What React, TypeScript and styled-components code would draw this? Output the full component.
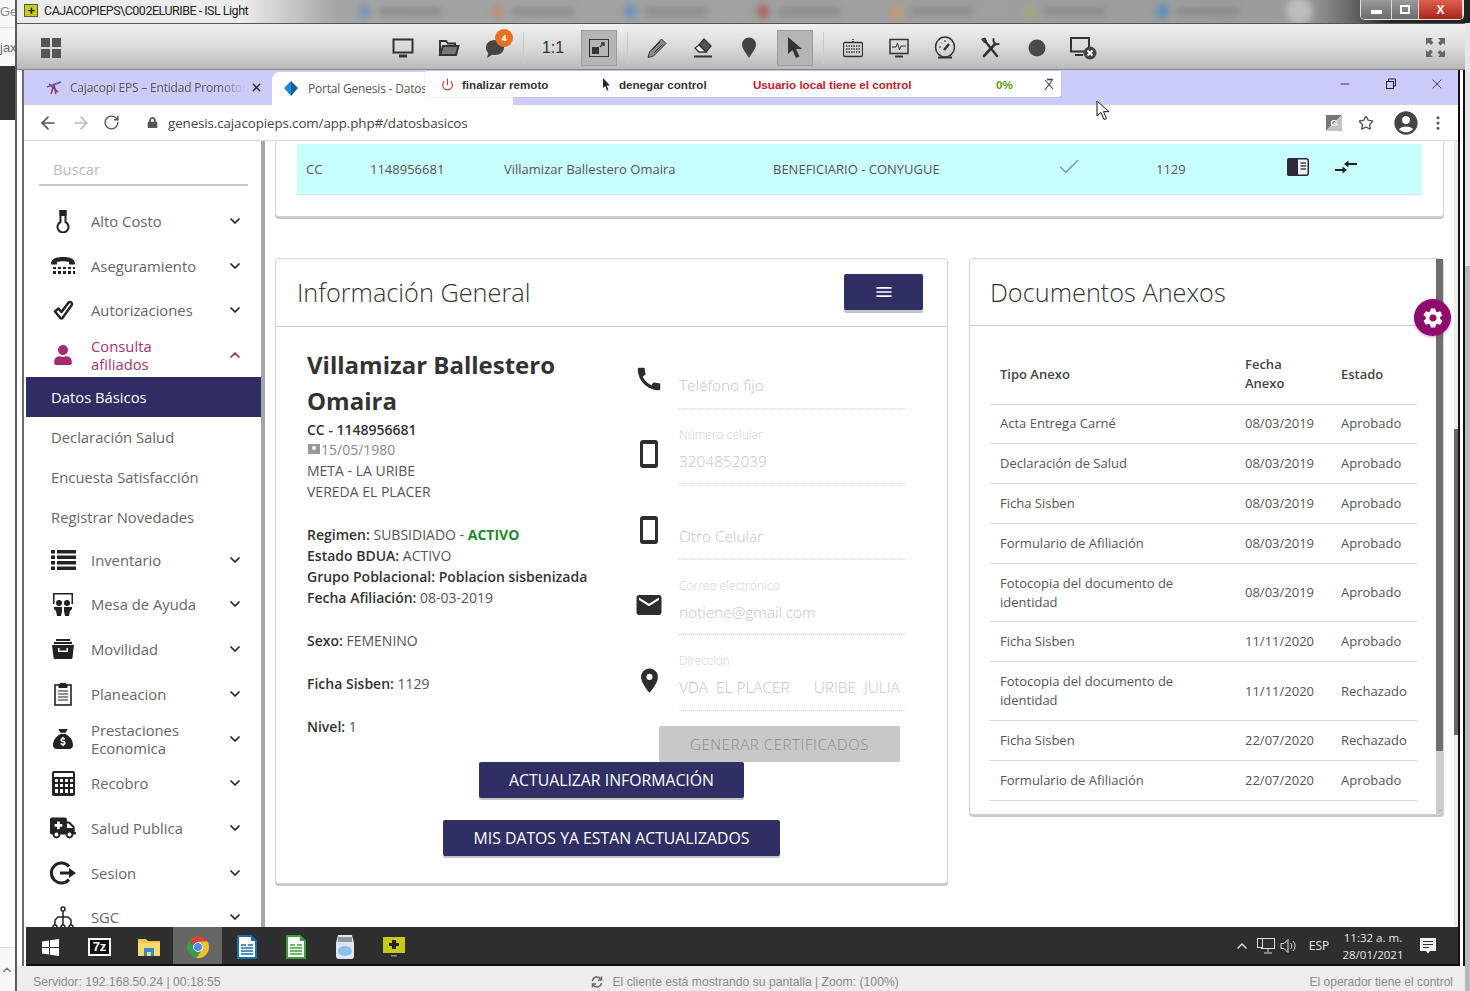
import { ReactNode } from 'react';
import styled, { createGlobalStyle } from 'styled-components';
import { FaAmbulance, FaLock, FaUser } from 'react-icons/fa';
import { FaSackDollar } from 'react-icons/fa6';
import { MdAccountCircle, MdCall, MdEmail, MdMenu, MdPlace, MdSettings } from 'react-icons/md';
import {
  ArrowLeft,
  ArrowRight,
  Check,
  ChevronDown,
  ChevronUp,
  EllipsisVertical,
  Minus,
  Power,
  RotateCw,
  Star,
  X,
} from 'lucide-react';

const GlobalStyle = createGlobalStyle`
  html, body {
    margin: 0;
    padding: 0;
    background: #fff;
    font-family: "Open Sans", sans-serif;
  }
  * { box-sizing: border-box; }
`;

const Screen = styled.div`
  position: relative;
  display: flex;
  width: 1470px;
  height: 991px;
  overflow: hidden;
  background: #fff;
`;

/* ---- desktop sliver on the left ---- */
const LeftStrip = styled.div`
  display: flex;
  flex-direction: column;
  width: 17px;
  height: 100%;
  border-right: 2px solid #5c5c5c;
  background: #f7f7f7;
  color: #888;
  font: 13px "Liberation Sans", sans-serif;
  overflow: hidden;
`;

const StripTab = styled.div`
  height: 28px;
  line-height: 24px;
  border-bottom: 1px solid #ddd;
  white-space: nowrap;
`;

const StripUrl = styled.div`
  height: 38px;
  line-height: 40px;
  white-space: nowrap;
  color: #666;
`;

const StripDark = styled.div`
  height: 54px;
  background: #333;
`;

const StripBody = styled.div`
  flex: 1;
  background: #fff;
  border-bottom: 1px solid #ddd;
`;

const StripFoot = styled.div`
  display: flex;
  align-items: center;
  height: 43px;
  color: #777;
`;

const Window = styled.div`
  display: flex;
  flex-direction: column;
  flex: 1;
  min-width: 0;
`;

/* ---- title bar ---- */
const TitleBar = styled.div`
  display: flex;
  align-items: flex-start;
  height: 23px;
  background: linear-gradient(90deg, #ececec 0, #ececec 225px, #a4a4a4 320px, #9c9c9c 1290px, #6d6d6d 1330px, #222 1375px);
  overflow: hidden;
`;

const TitleBlock = styled.div`
  display: flex;
  align-items: center;
  gap: 6px;
  width: 334px;
  height: 21px;
  padding-left: 7px;
  color: #222;
  font: 12.5px "Roboto", sans-serif;
  letter-spacing: -0.5px;
  white-space: nowrap;
`;

const IslBadge = styled.span`
  display: flex;
  align-items: center;
  justify-content: center;
  width: 14px;
  height: 13px;
  border: 1px solid #555;
  background: #c8cc12;
  color: #222;
  font: bold 13px/11px "Liberation Sans", sans-serif;
`;

const BlurredTabs = styled.div`
  display: flex;
  filter: blur(3px);
`;

const BlurredTab = styled.div`
  display: flex;
  align-items: center;
  gap: 8px;
  width: 133px;
  height: 22px;
  padding-left: 7px;
`;

const BlurDot = styled.span<{ $color: string }>`
  width: 13px;
  height: 15px;
  border-radius: 50%;
  background: ${p => p.$color};
`;

const BlurLabel = styled.span`
  width: 62px;
  height: 7px;
  background: #8a8a8a;
`;

const BlurCircle = styled.div`
  width: 26px;
  height: 26px;
  margin: -2px 0 0 4px;
  border-radius: 50%;
  background: #bdbdbd;
  filter: blur(3px);
`;

const WinControls = styled.div`
  display: flex;
  margin: 0 6px 0 auto;
  height: 20px;
  border: 1px solid #e4e4e4;
  border-top: 0;
  border-radius: 0 0 5px 5px;
  overflow: hidden;
`;

const WinControl = styled.div<{ $w: number; $close?: boolean }>`
  display: flex;
  align-items: center;
  justify-content: center;
  width: ${p => p.$w}px;
  background: ${p => (p.$close ? 'linear-gradient(#e0604f, #a8261a)' : 'linear-gradient(#9a9a9a, #6a6a6a)')};
  border-right: 1px solid #d8d8d8;
  color: #fff;
  font: bold 12px "Liberation Sans", sans-serif;
`;

const WinMinMark = styled.span`
  width: 11px;
  height: 4px;
  margin-top: 5px;
  background: #fff;
`;

const WinMaxMark = styled.span`
  width: 10px;
  height: 9px;
  border: 2px solid #fff;
`;

const LowerRow = styled.div`
  display: flex;
  flex: 1;
  min-height: 0;
`;

const RemoteFrame = styled.div`
  display: flex;
  flex-direction: column;
  flex: 1;
  min-width: 0;
`;

const OuterScroll = styled.div`
  width: 5px;
  background: linear-gradient(#e6e6e6 0, #e6e6e6 243px, #b8b8b8 243px);
`;

/* ---- ISL toolbar ---- */
const Toolbar = styled.div`
  display: flex;
  align-items: center;
  height: 47px;
  padding: 2px 20px 0 24px;
  border-top: 1px solid #555;
  border-bottom: 1px solid #888;
  background: linear-gradient(#f1f1f1, #d8d8d8 55%, #b9b9b9);
  color: #444;
`;

const ToolGroup = styled.div`
  display: flex;
  align-items: center;
  margin-left: 319px;
`;

const ToolBtn = styled.div<{ $active?: boolean }>`
  position: relative;
  display: flex;
  align-items: center;
  justify-content: center;
  width: 46px;
  height: 36px;
  font: 16px "Liberation Sans", sans-serif;
  color: #333;
  ${p => p.$active && `
    margin: 0 5px;
    width: 36px;
    background: #b5b5b5;
    border: 1px solid #9c9c9c;
  `}
`;

const ToolSep = styled.div`
  width: 1px;
  height: 32px;
  margin: 0 6px 0 5px;
  background: #c9c9c9;
`;

const ChatBadge = styled.span`
  position: absolute;
  top: -1px;
  right: 5px;
  display: flex;
  align-items: center;
  justify-content: center;
  width: 18px;
  height: 18px;
  border-radius: 50%;
  background: #e8701f;
  color: #fff;
  font: bold 9px "Open Sans", sans-serif;
`;

const ExpandBtn = styled.div`
  display: flex;
  margin-left: auto;
`;

/* ---- frame around the remote screen ---- */
const RemoteBody = styled.div`
  display: flex;
  flex: 1;
  min-height: 0;
  padding-left: 5px;
  background: #fff;
`;

const Browser = styled.div`
  display: flex;
  flex-direction: column;
  flex: 1;
  min-width: 0;
  border-left: 2px solid #6b6b6b;
`;

const RightRail = styled.div`
  width: 7px;
  border-left: 2px solid #111;
  border-right: 2px solid #111;
  background: #fff;
`;

const TabStrip = styled.div`
  display: flex;
  align-items: flex-end;
  height: 35px;
  background: #ccccfb;
`;

const InactiveTab = styled.div`
  display: flex;
  align-items: center;
  width: 246px;
  height: 35px;
  padding: 0 7px 0 22px;
  color: #555;
  font: 12px "Open Sans", sans-serif;
  white-space: nowrap;
`;

const TabLabel = styled.span`
  width: 176px;
  margin-left: 8px;
  overflow: hidden;
  letter-spacing: -0.2px;
  -webkit-mask-image: linear-gradient(90deg, #000 85%, transparent);
  mask-image: linear-gradient(90deg, #000 85%, transparent);
`;

const TabClose = styled.span`
  display: flex;
  margin-left: auto;
  color: #222;
`;

const ActiveTab = styled.div`
  display: flex;
  align-items: center;
  width: 241px;
  height: 33px;
  margin-left: 2px;
  padding-left: 11px;
  border-radius: 8px 8px 0 0;
  background: #fff;
  color: #555;
  font: 12px "Open Sans", sans-serif;
  white-space: nowrap;
  letter-spacing: -0.2px;
`;

const ActiveTabLabel = styled.span`
  margin-left: 9px;
`;

const StripControls = styled.div`
  display: flex;
  align-items: center;
  gap: 30px;
  height: 31px;
  margin: 0 13px 6px auto;
  color: #222;
`;

const StripControl = styled.span`
  display: flex;
  justify-content: center;
  width: 16px;
`;

const AddressBar = styled.div`
  display: flex;
  align-items: center;
  height: 36px;
  padding: 0 11px 0 14px;
  border-bottom: 1px solid #dcdcdc;
  background: #fff;
  color: #555;
`;

const NavIcons = styled.div`
  display: flex;
  align-items: center;
  gap: 12.5px;
`;

const LockSlot = styled.span`
  display: flex;
  margin: 0 10px 0 27px;
  color: #555;
`;

const UrlText = styled.span`
  color: #444;
  font: 13.4px "Open Sans", sans-serif;
  letter-spacing: -0.12px;
`;

const AddressActions = styled.div`
  display: flex;
  align-items: center;
  gap: 16px;
  margin-left: auto;
`;

const TranslateMark = styled.span`
  display: flex;
  align-items: center;
  justify-content: center;
  width: 16px;
  height: 16px;
  background: linear-gradient(135deg, #777 50%, #c4c4c4 50%);
  color: #fff;
  font: bold 9px "Liberation Sans", sans-serif;
`;

const Avatar = styled(MdAccountCircle)`
  margin: 0 -7px 0 2px;
  color: #444;
`;

/* ---- floating remote session bar ---- */
const SessionBar = styled.div`
  position: absolute;
  top: 71px;
  left: 425px;
  display: flex;
  align-items: center;
  width: 636px;
  height: 26px;
  border-radius: 0 0 3px 3px;
  background: #fff;
  box-shadow: 0 0 2px rgba(0, 0, 0, 0.2);
  font: bold 11.6px "Liberation Sans", sans-serif;
`;

const SessionItem = styled.span<{ $w: number; $color?: string; $pl?: number }>`
  display: flex;
  align-items: center;
  gap: 8px;
  flex: none;
  width: ${p => p.$w}px;
  padding-left: ${p => p.$pl ?? 0}px;
  color: ${p => p.$color ?? '#333'};
  white-space: nowrap;
`;

const MouseCursor = styled.svg`
  position: absolute;
  top: 100px;
  left: 1096px;
`;

/* ---- sidebar ---- */
const Content = styled.div`
  display: flex;
  flex: 1;
  min-height: 0;
  padding-left: 2px;
  background: #fff;
`;

const Sidebar = styled.nav`
  flex: none;
  width: 235px;
  height: 100%;
  overflow: hidden;
  background: #fff;
`;

const SearchBox = styled.div`
  height: 45px;
  margin: 0 13px 12.7px;
  padding: 16px 0 0 14px;
  border-bottom: 2px solid #c8c8c8;
  color: #bbb;
  font-size: 14.8px;
  line-height: 24px;
`;

const MenuItem = styled.div<{ $active?: boolean }>`
  display: flex;
  align-items: center;
  height: 44.7px;
  padding: 0 18px 0 25px;
  color: ${p => (p.$active ? '#a8336f' : '#666')};
  font-size: 14.8px;
  line-height: 18px;
`;

const MenuIcon = styled.span<{ $active?: boolean }>`
  display: flex;
  align-items: center;
  justify-content: center;
  flex: none;
  width: 24px;
  height: 24px;
  color: ${p => (p.$active ? '#a52a6b' : '#222')};
  svg { flex: none; }
`;

const MenuLabel = styled.span`
  flex: 1;
  margin-left: 16px;
`;

const MenuChevron = styled.span<{ $active?: boolean }>`
  display: flex;
  color: ${p => (p.$active ? '#a52a6b' : '#222')};
`;

const SubItem = styled.div<{ $active?: boolean }>`
  display: flex;
  align-items: center;
  height: 40px;
  padding-left: 25px;
  background: ${p => (p.$active ? '#2f2d63' : 'transparent')};
  color: ${p => (p.$active ? '#fff' : '#666')};
  font-size: 14.8px;
`;

const SideTrack = styled.div`
  flex: none;
  width: 4px;
  background: #a6a6a6;
`;

/* ---- main content ---- */
const Main = styled.main`
  flex: 1;
  min-width: 0;
  padding: 0 10px 0 10px;
  overflow: hidden;
  background: #fff;
`;

const PageTrack = styled.div`
  flex: none;
  width: 4px;
  background: linear-gradient(#ececec 0, #ececec 288px, #666 288px, #666 594px, #ececec 594px);
`;

const TopCard = styled.section`
  height: 76px;
  padding: 3px 21px 0;
  border: 1px solid #d3d3d3;
  border-top: 0;
  border-radius: 0 0 4px 4px;
  box-shadow: 0 2px 0 #c8c8c8;
`;

const AffiliateRow = styled.div`
  display: grid;
  grid-template-columns: 64px 134px 269px 283px 100px 131px 48px 40px;
  align-items: center;
  height: 51px;
  padding-left: 9px;
  border-bottom: 1px solid #d5e8e8;
  background: #c8ffff;
  color: #555;
  font-size: 13px;
`;

const CellIcon = styled.span`
  display: flex;
  margin-top: -4px;
  color: #222;
`;

const CheckMark = styled.span`
  display: flex;
  margin-top: -4px;
  color: #8a9aae;
`;

const Columns = styled.div`
  display: flex;
  align-items: flex-start;
  gap: 21px;
  margin-top: 41px;
`;

const Card = styled.section<{ $w: number }>`
  flex: none;
  width: ${p => p.$w}px;
  border: 1px solid #d3d3d3;
  border-radius: 4px;
  box-shadow: 0 2px 0 #c8c8c8;
  background: #fff;
`;

const CardHeader = styled.header<{ $h: number; $pl: number }>`
  display: flex;
  align-items: center;
  justify-content: space-between;
  height: ${p => p.$h}px;
  padding: 0 24px 0 ${p => p.$pl}px;
  border-bottom: 1px solid #c9c9c9;
`;

const CardTitle = styled.h2`
  margin: -1px 0 0;
  color: #333;
  font-size: 25.3px;
  font-weight: 300;
`;

const MenuButton = styled.button`
  display: flex;
  align-items: center;
  justify-content: center;
  width: 79px;
  height: 36px;
  margin-top: -1px;
  border: 0;
  border-radius: 2px;
  background: #2f2f66;
  box-shadow: 0 3px 0 #c4c4c4;
  color: #fff;
`;

const InfoBody = styled.div`
  display: grid;
  grid-template-columns: 361px 270px;
`;

const Person = styled.div`
  padding: 20px 0 0 31px;
  color: #555;
  font-size: 14px;
  line-height: 20.9px;
`;

const PersonName = styled.h3`
  margin: 0 0 0.5px;
  color: #333;
  font-size: 24px;
  font-weight: 700;
  line-height: 36px;
`;

const PersonStrong = styled.div`
  color: #333;
  font-weight: 600;
`;

const BirthRow = styled.div`
  display: flex;
  align-items: flex-start;
  color: #888;
`;

const BirthIcon = styled.svg`
  margin-top: 2px;
`;

const InfoGroup = styled.div`
  margin-top: 22px;
`;

const Strong = styled.b`
  color: #333;
  font-weight: 600;
`;

const ActiveText = styled.b`
  color: #1c8a2a;
  font-weight: 700;
`;

const Contact = styled.div`
  display: flex;
  flex-direction: column;
  padding-top: 6px;
`;

const Field = styled.div`
  display: grid;
  grid-template-columns: 24px 227px;
  column-gap: 18px;
  height: 75.5px;
`;

const FieldIcon = styled.span`
  display: flex;
  align-items: center;
  justify-content: center;
  align-self: end;
  height: 24px;
  margin-bottom: 18px;
  color: #2d2d2d;
  svg { flex: none; }
`;

const FieldBody = styled.div`
  display: flex;
  flex-direction: column;
  justify-content: flex-end;
  border-bottom: 1px dotted #d4d4d4;
`;

const FieldLabel = styled.span`
  color: #cfcfcf;
  font-size: 12px;
  font-weight: 300;
  line-height: 25px;
`;

const FieldValue = styled.span`
  height: 36.5px;
  padding-bottom: 6.5px;
  color: #c4c4c4;
  font-size: 15.4px;
  font-weight: 300;
  line-height: 30px;
  white-space: pre;
`;

const DisabledButton = styled.div`
  display: flex;
  align-items: center;
  justify-content: center;
  width: 241px;
  height: 36px;
  margin: 15.5px 0 0 22px;
  border-radius: 2px;
  background: #c8c8c8;
  color: #8a8a8a;
  font-size: 15px;
  font-weight: 300;
  letter-spacing: 0.6px;
`;

const InfoActions = styled.div`
  display: flex;
  flex-direction: column;
  align-items: center;
  gap: 22px;
  padding-bottom: 27px;
`;

const PrimaryButton = styled.button<{ $w: number }>`
  width: ${p => p.$w}px;
  height: 36px;
  border: 0;
  border-radius: 2px;
  background: #2f2f66;
  box-shadow: 0 2px 0 #c4c4c4;
  color: #fff;
  font: 400 15.8px "Open Sans", sans-serif;
`;

const DocsCard = styled(Card)`
  position: relative;
  height: 557px;
`;

const DocsScroll = styled.div`
  position: absolute;
  top: 0;
  right: 0;
  bottom: 0;
  display: flex;
  align-items: flex-end;
  width: 7px;
  background: linear-gradient(#6e6e6e 0, #6e6e6e 492px, #cdcdcd 492px);
  color: #888;
`;

const DocsBody = styled.div`
  padding: 19px 26px 0 20px;
`;

const DocsTable = styled.table`
  width: 427px;
  border-collapse: collapse;
  table-layout: fixed;
  color: #555;
  font-size: 13px;
  line-height: 19px;
`;

const HeadCell = styled.th<{ $w: number }>`
  width: ${p => p.$w}px;
  height: 59px;
  padding: 0 10px;
  border-bottom: 1px solid #d3d3d3;
  color: #444;
  font-weight: 600;
  text-align: left;
`;

const DocCell = styled.td`
  padding: 9.9px 10px;
  border-bottom: 1px solid #d8d8d8;
`;

const SettingsFab = styled.div`
  position: absolute;
  top: 299px;
  left: 1414px;
  display: flex;
  align-items: center;
  justify-content: center;
  width: 37px;
  height: 37px;
  border-radius: 50%;
  background: #8e0a6c;
  box-shadow: 0 1px 3px rgba(120, 0, 90, 0.4);
  color: #fff;
`;

/* ---- windows taskbar ---- */
const Taskbar = styled.div`
  display: flex;
  align-items: center;
  flex: none;
  height: 39px;
  margin-left: 2px;
  border-bottom: 2px solid #111;
  background: #2e2e2e;
  color: #e8e8e8;
`;

const TaskSlot = styled.div<{ $active?: boolean }>`
  display: flex;
  align-items: center;
  justify-content: center;
  width: 49px;
  height: 37px;
  padding-top: 3px;
  background: ${p => (p.$active ? '#666' : 'transparent')};
`;

const SevenZip = styled.span`
  display: flex;
  align-items: center;
  justify-content: center;
  width: 23px;
  height: 18px;
  border: 2px solid #fff;
  background: #111;
  color: #fff;
  font: bold 13px/14px "Liberation Sans", sans-serif;
`;

const Tray = styled.div`
  display: flex;
  align-items: center;
  height: 100%;
  margin-left: auto;
  font-size: 12px;
`;

const TrayIcon = styled.span<{ $w: number }>`
  display: flex;
  align-items: center;
  justify-content: center;
  width: ${p => p.$w}px;
`;

const TrayClock = styled.div`
  width: 76px;
  margin-left: -3px;
  text-align: center;
  font-size: 11.5px;
  line-height: 17px;
`;

const Status = styled.footer`
  display: flex;
  align-items: center;
  flex: none;
  height: 25px;
  padding: 6px 12px 0 16px;
  background: #ededed;
  color: #8a8a8a;
  font: 12.2px "Liberation Sans", sans-serif;
`;

const StatusCenter = styled.span`
  display: flex;
  align-items: center;
  gap: 9px;
  margin-left: 371px;
`;

const StatusEnd = styled.span`
  margin-left: auto;
  font-size: 12px;
`;

/* ---- drawn icons ---- */
const GridIcon = () => (
  <svg width="20" height="20" viewBox="0 0 20 20" fill="#555">
    <rect width="9" height="9" /><rect x="11" width="9" height="9" />
    <rect y="11" width="9" height="9" /><rect x="11" y="11" width="9" height="9" />
  </svg>
);

const MonitorIcon = () => (
  <svg width="22" height="20" viewBox="0 0 22 20" fill="none" stroke="#333" strokeWidth="2">
    <rect x="1.500" y="1.500" width="19" height="13" /><path d="M7 18h8" strokeWidth="3" />
  </svg>
);

const FolderIcon = () => (
  <svg width="22" height="18" viewBox="0 0 22 18" fill="none" stroke="#333" strokeWidth="2">
    <path d="M2 16V2h6l2 2.500h7V7" /><path d="M2 16 5 7h15.500L18 16Z" fill="#777" />
  </svg>
);

const ChatIcon = () => (
  <svg width="24" height="22" viewBox="0 0 24 22" fill="#444">
    <path d="M12 3c5.500 0 9 3 9 7.500S17.500 18 12 18c-1 0-2 0-3-.3L4 21l1.300-5C3.500 14.500 3 12.500 3 10.500 3 6 6.500 3 12 3Z" />
  </svg>
);

const ResizeIcon = () => (
  <svg width="20" height="18" viewBox="0 0 20 18">
    <rect x=".5" y=".5" width="19" height="17" fill="none" stroke="#333" />
    <rect x="3" y="8" width="7" height="7" fill="#333" />
    <path d="m11 8 4-4M12 4h3v3" stroke="#333" fill="none" strokeWidth="1.300" />
  </svg>
);

const PencilIcon = () => (
  <svg width="22" height="22" viewBox="0 0 22 22" fill="#8a8a8a" stroke="#333">
    <path d="M15.500 2 20 6.500 7.500 19 2 20.500 3.500 15Z" />
    <path d="m6 13 8-8M8.500 15.500l8-8" fill="none" />
  </svg>
);

const EraserIcon = () => (
  <svg width="22" height="22" viewBox="0 0 22 22" stroke="#333" strokeWidth="1.300">
    <path d="M12 2 19 9l-5 6-7-7Z" fill="#555" />
    <path d="M7 8l7 7H7l-4-4Z" fill="#f4f4f4" />
    <path d="M2 19.500h18" strokeWidth="2" />
  </svg>
);

const PinIcon = () => (
  <svg width="16" height="22" viewBox="0 0 16 22" fill="#444">
    <path d="M8 21C4 15 1 11 1 7.500a7 7 0 0 1 14 0C15 11 12 15 8 21Z" />
  </svg>
);

const ArrowIcon = () => (
  <svg width="18" height="24" viewBox="0 0 18 24" fill="#333">
    <path d="M2 1v17l4.500-4 3.500 8 3.500-1.500-3.500-7.500H16Z" />
  </svg>
);

const KeyboardIcon = () => (
  <svg width="20" height="20" viewBox="0 0 20 20" stroke="#333" fill="none">
    <rect x=".5" y="4.500" width="19" height="14" rx="1.500" strokeWidth="1.300" />
    <path d="M10 4.500V1M3 8h14M3 11h14M3 14h14" strokeDasharray="1.500 1" strokeWidth="1.500" />
  </svg>
);

const WaveMonitorIcon = () => (
  <svg width="20" height="20" viewBox="0 0 20 20" fill="none" stroke="#333" strokeWidth="1.500">
    <rect x="1" y="1.500" width="18" height="14" />
    <path d="M3 9h4l1.500-4 2 7L12 8h5" strokeWidth="1" />
    <path d="M6 18.500h8" strokeWidth="2" />
  </svg>
);

const GaugeIcon = () => (
  <svg width="22" height="24" viewBox="0 0 22 24" fill="none" stroke="#333" strokeWidth="1.500">
    <ellipse cx="11" cy="11" rx="9.500" ry="10" />
    <path d="m10 14 5-6" strokeWidth="2.500" /><path d="M4 21.500h14" strokeWidth="2" />
    <path d="M5 11h2M11 4v2M7 6.500l1 1" strokeWidth="1" />
  </svg>
);

const ToolsIcon = () => (
  <svg width="20" height="22" viewBox="0 0 20 22" fill="none" stroke="#333" strokeLinecap="round">
    <path d="M4 4 16 19" strokeWidth="2.400" />
    <path d="M14 7 3 19" strokeWidth="2.600" />
    <path d="M12.500 2a4 4 0 0 0 5 5" strokeWidth="2" />
    <path d="M1 2l3-1 1.500 3-2 1.500Z" fill="#333" strokeWidth="1" />
  </svg>
);

const DotIcon = () => (
  <svg width="18" height="18" viewBox="0 0 18 18"><circle cx="9" cy="9" r="8.500" fill="#4a4a4a" /></svg>
);

const MonitorCloseIcon = () => (
  <svg width="28" height="24" viewBox="0 0 28 24" fill="none">
    <path d="M16 15.500H2V2h18v11" stroke="#333" strokeWidth="2" />
    <path d="M6 19h8" stroke="#333" strokeWidth="2" />
    <circle cx="21" cy="17" r="6.500" fill="#444" />
    <path d="m18.500 14.500 5 5m0-5-5 5" stroke="#fff" strokeWidth="1.800" />
  </svg>
);

const ExpandIcon = () => (
  <svg width="19" height="19" viewBox="0 0 19 19" fill="#666">
    <path d="M0 0h7L5 2l2.500 2.500L5 7 2.500 4.500 0 7ZM19 0v7l-2-2-2.500 2.500L12 5l2.500-2.500L12 0ZM0 19v-7l2 2 2.500-2.500L7 14l-2.500 2.500L7 19ZM19 19h-7l2-2-2.500-2.500L14 12l2.500 2.500L19 12Z" />
  </svg>
);

const PinCrossIcon = () => (
  <svg width="12" height="13" viewBox="0 0 12 13" fill="none" stroke="#444" strokeWidth="1.100">
    <path d="M2 2l8 9M10 1 2 12" />
    <path d="M4 1.500h5" strokeWidth="1.600" />
  </svg>
);

const SmallPointer = () => (
  <svg width="9" height="13" viewBox="0 0 9 13" fill="#222"><path d="M1 0v10l2.200-2 1.800 4.500 1.500-.6L4.800 7.500H8Z" /></svg>
);

const CajacopiLogo = () => (
  <svg width="16" height="14" viewBox="0 0 16 14" fill="none" strokeWidth="1.500">
    <path d="M1 6c5-2 9-3 14-5" stroke="#5a5ab8" />
    <path d="M5 13 8 3l2 10" stroke="#b0305a" />
    <path d="M3 3l9 8" stroke="#4a4aa0" />
  </svg>
);

const GenesisLogo = () => (
  <svg width="16" height="17" viewBox="0 0 16 17">
    <path d="M8 1 1 8l7 8Z" fill="#2188cf" /><path d="M8 1l7 7-7 8Z" fill="#155e96" />
  </svg>
);

const FlaskIcon = () => (
  <svg width="14" height="24" viewBox="0 0 14 24" fill="none" stroke="#222" strokeWidth="2">
    <path d="M4.500 2h5v11a5.500 5.500 0 1 1-5 0Z" />
    <path d="M4.500 2h5v4h-5Z" fill="#222" />
  </svg>
);

const HandsetIcon = () => (
  <svg width="26" height="19" viewBox="0 0 26 19" fill="#222">
    <path d="M1 7.500C1 3 6 1 13 1s12 2 12 6.500c0 .7-.5 1-1 1h-4c-.6 0-1-.4-1-1V6c-3-1-9-1-12 0v1.500c0 .6-.4 1-1 1H2c-.5 0-1-.3-1-1Z" />
    <path d="M3 11h3v2H3ZM8 11h3v2H8ZM13 11h3v2h-3ZM18 11h3v2h-3ZM23 11h2v2h-2ZM3 15h3v3H3ZM8 15h3v3H8ZM13 15h3v3h-3ZM18 15h3v3h-3ZM23 15h2v3h-2Z" />
  </svg>
);

const CheckOutlineIcon = () => (
  <svg width="21" height="21" viewBox="0 0 21 21" fill="none" stroke="#222" strokeWidth="2.400" strokeLinejoin="round">
    <path d="M2 11.500 5.500 8.500 8.500 12 15.500 2.500c2-1.200 3.800 0 3.500 2L9.500 18c-.7.800-1.600.800-2.200 0Z" />
  </svg>
);

const ListIcon = () => (
  <svg width="25" height="20" viewBox="0 0 25 20" fill="#222">
    <rect y="0" width="4" height="3.500" /><rect x="6" y="0" width="19" height="3.500" />
    <rect y="5.500" width="4" height="3.500" /><rect x="6" y="5.500" width="19" height="3.500" />
    <rect y="11" width="4" height="3.500" /><rect x="6" y="11" width="19" height="3.500" />
    <rect y="16.500" width="4" height="3.500" /><rect x="6" y="16.500" width="19" height="3.500" />
  </svg>
);

const HelpDeskIcon = () => (
  <svg width="22" height="25" viewBox="0 0 22 25" fill="#222">
    <path d="M1 1h20v11h-1.500V2.500h-17V12H1Z" />
    <circle cx="7" cy="11" r="3" /><circle cx="15" cy="11" r="3" />
    <path d="M2 15h8v4l-1 5H5l-1-5-2-2ZM12 15h8v2l-2 2-1 5h-4l-1-5Z" />
  </svg>
);

const DrawerIcon = () => (
  <svg width="24" height="20" viewBox="0 0 24 20" fill="#222">
    <rect x="5" y="0" width="14" height="2" /><rect x="3" y="3" width="18" height="2" />
    <path d="M1 6h22l-1.500 12.500a1.500 1.500 0 0 1-1.500 1.500H4a1.500 1.500 0 0 1-1.500-1.500ZM7 9v4h10V9h-1.500v2.500h-7V9Z" fillRule="evenodd" />
  </svg>
);

const ClipboardIcon = () => (
  <svg width="18" height="24" viewBox="0 0 18 24" fill="none" stroke="#222">
    <rect x="1" y="3" width="16" height="20" strokeWidth="1.600" />
    <path d="M6 4V1.500h6V4" fill="#222" />
    <rect x="5" y="3" width="8" height="2.500" fill="#222" />
    <path d="M4 9h10M4 12h10M4 15h10M4 18h10" strokeWidth="1.200" />
  </svg>
);

const CalculatorIcon = () => (
  <svg width="23" height="25" viewBox="0 0 23 25" fill="#222">
    <path d="M2 0h19a2 2 0 0 1 2 2v21a2 2 0 0 1-2 2H2a2 2 0 0 1-2-2V2a2 2 0 0 1 2-2Zm0 2v4h19V2ZM3 8v3h3V8Zm5 0v3h3V8Zm5 0v3h3V8Zm5 0v3h3V8ZM3 13v3h3v-3Zm5 0v3h3v-3Zm5 0v3h3v-3Zm5 0v3h3v-3ZM3 18v4h3v-4Zm5 0v4h3v-4Zm5 0v4h3v-4Zm5 0v4h3v-4Z" fillRule="evenodd" />
  </svg>
);

const LogoutIcon = () => (
  <svg width="28" height="24" viewBox="0 0 28 24" fill="none" stroke="#222" strokeWidth="3">
    <path d="M20 5.500A10 10 0 1 0 20 18.500" />
    <path d="M11 12h12" /><path d="M20 7l7 5-7 5Z" fill="#222" strokeWidth="0" />
  </svg>
);

const TreeIcon = () => (
  <svg width="24" height="26" viewBox="0 -3 24 26" fill="none" stroke="#222" strokeWidth="1.500">
    <circle cx="12" cy="2" r="2" />
    <path d="M12 4v14M4 18v-5l3-3h10l3 3v5" />
    <circle cx="4" cy="20" r="2" /><circle cx="12" cy="20" r="2" /><circle cx="20" cy="20" r="2" />
  </svg>
);

const TabletIcon = () => (
  <svg width="18" height="28" viewBox="0 0 18 28">
    <path d="M3 0h12a3 3 0 0 1 3 3v22a3 3 0 0 1-3 3H3a3 3 0 0 1-3-3V3a3 3 0 0 1 3-3Zm0 4v20h12V4Z" fill="#2d2d2d" fillRule="evenodd" />
  </svg>
);

const BookIcon = () => (
  <svg width="22" height="18" viewBox="0 0 22 18">
    <rect x=".75" y=".75" width="20.500" height="16.500" rx="2" fill="#e8f4f8" stroke="#262638" strokeWidth="1.500" />
    <path d="M2.500 0H11v18H2.500A2.500 2.500 0 0 1 0 15.500v-13A2.500 2.500 0 0 1 2.500 0Z" fill="#2f2a33" />
    <path d="M13.500 5h5.500M13.500 8h5.500M13.500 11h5.500" stroke="#444" strokeWidth="1.300" />
  </svg>
);

const SwapIcon = () => (
  <svg width="22" height="14" viewBox="0 0 22 14" fill="#222">
    <path d="M0 9h7.500V6.500L12 10l-4.500 3.500V11H0ZM22 3v2h-8.500v2.500L9 4l4.500-3.500V3Z" />
  </svg>
);

const WindowsLogo = () => (
  <svg width="17" height="17" viewBox="0 0 17 17" fill="#fff">
    <path d="M0 2.500 7 1.500V8H0ZM8 1.300 17 0v8H8ZM0 9h7v6.500L0 14.500ZM8 9h9v8l-9-1.300Z" />
  </svg>
);

const FolderTask = () => (
  <svg width="22" height="20" viewBox="0 0 22 20">
    <path d="M0 2h8l2 2h12v15H0Z" fill="#f4c542" />
    <path d="M0 6h22v13H0Z" fill="#fbd971" />
    <rect x="6" y="11" width="10" height="8" fill="#2c8fc9" />
    <rect x="9" y="15" width="4" height="4" fill="#fbd971" />
  </svg>
);

const ChromeLogo = () => (
  <svg width="24" height="24" viewBox="0 0 24 24">
    <path d="M12 1a11 11 0 0 1 9.500 5.500H12a5.500 5.500 0 0 0-5 3.200L3.500 5A11 11 0 0 1 12 1Z" fill="#d8433a" />
    <path d="M3.500 5 8 13a5.500 5.500 0 0 0 5.500 4l-3 6A11 11 0 0 1 3.500 5Z" fill="#3b9a4b" />
    <path d="M21.500 6.500A11 11 0 0 1 10.500 23l4.500-7.500a5.500 5.500 0 0 0 .5-7l-3.500-2Z" fill="#eec22d" />
    <circle cx="12" cy="12" r="4.500" fill="#4c8bf0" stroke="#fff" strokeWidth="1" />
  </svg>
);

const DocTask = ({ color, tint }: { color: string; tint: string }) => (
  <svg width="20" height="24" viewBox="0 0 20 24">
    <path d="M1 1h13l5 5v17H1Z" fill="#fff" stroke={color} strokeWidth="2" />
    <path d="M14 1l5 5h-5Z" fill={color} />
    <path d="M4 10h5M11 10h5M4 13h12M4 16h12M4 19h12" stroke={tint} strokeWidth="1.500" />
  </svg>
);

const ScannerTask = () => (
  <svg width="20" height="26" viewBox="0 0 20 26">
    <path d="M3 1h14l2 8v13a3 3 0 0 1-3 3H4a3 3 0 0 1-3-3V9Z" fill="#dfe6ee" />
    <rect x="3" y="3" width="14" height="5" fill="#8b98a6" />
    <ellipse cx="10" cy="17" rx="7" ry="5" fill="#8cc1ee" />
  </svg>
);

const IslTask = () => (
  <svg width="22" height="20" viewBox="0 0 22 20">
    <rect width="22" height="16" fill="#c6cc16" />
    <path d="M9 3h4v3h3v3h-3v3H9V9H6V6h3Z" fill="#222" />
    <rect x="8" y="18" width="6" height="1.500" fill="#888" />
  </svg>
);

const NetworkIcon = () => (
  <svg width="18" height="16" viewBox="0 0 18 16" fill="none" stroke="#ddd">
    <rect x="4.500" y=".5" width="13" height="10" /><rect x=".5" y=".5" width="5" height="9" fill="#2e2e2e" />
    <path d="M11 11v3M7 15h8" />
  </svg>
);

const VolumeIcon = () => (
  <svg width="18" height="16" viewBox="0 0 18 16" fill="none" stroke="#ddd">
    <path d="M1 5.500h3l4-4v13l-4-4H1Z" /><path d="M10.500 5a4 4 0 0 1 0 6M13 3a7 7 0 0 1 0 10" />
  </svg>
);

const NotifyIcon = () => (
  <svg width="16" height="16" viewBox="0 0 16 16" fill="#f2f2f2">
    <path d="M0 0h16v13H10l-2 2.500L6 13H0Z" />
    <path d="M3 3.500h10M3 6.500h10M3 9.500h6" stroke="#2e2e2e" />
  </svg>
);

const SyncIcon = () => (
  <svg width="12" height="12" viewBox="0 0 12 12" fill="none" stroke="#666" strokeWidth="1.500">
    <path d="M1.500 5A4.500 4.500 0 0 1 10 3.500M10.500 7A4.500 4.500 0 0 1 2 8.500" />
    <path d="M10.500 .5v3.500H7M1.500 11.500V8H5" />
  </svg>
);

type Menu = { label: ReactNode; icon: ReactNode };

const chevron = <ChevronDown size={16} strokeWidth={2.6} />;

const topMenus: Menu[] = [
  { label: 'Alto Costo', icon: <FlaskIcon /> },
  { label: 'Aseguramiento', icon: <HandsetIcon /> },
  { label: 'Autorizaciones', icon: <CheckOutlineIcon /> },
];

const subMenus = ['Datos Básicos', 'Declaración Salud', 'Encuesta Satisfacción', 'Registrar Novedades'];

const lowerMenus: Menu[] = [
  { label: 'Inventario', icon: <ListIcon /> },
  { label: 'Mesa de Ayuda', icon: <HelpDeskIcon /> },
  { label: 'Movilidad', icon: <DrawerIcon /> },
  { label: 'Planeacion', icon: <ClipboardIcon /> },
  { label: 'Prestaciones Economica', icon: <FaSackDollar size={20} /> },
  { label: 'Recobro', icon: <CalculatorIcon /> },
  { label: 'Salud Publica', icon: <FaAmbulance size={26} /> },
  { label: 'Sesion', icon: <LogoutIcon /> },
  { label: 'SGC', icon: <TreeIcon /> },
];

const documents = [
  ['Acta Entrega Carné', '08/03/2019', 'Aprobado'],
  ['Declaración de Salud', '08/03/2019', 'Aprobado'],
  ['Ficha Sisben', '08/03/2019', 'Aprobado'],
  ['Formulario de Afiliación', '08/03/2019', 'Aprobado'],
  ['Fotocopia del documento de identidad', '08/03/2019', 'Aprobado'],
  ['Ficha Sisben', '11/11/2020', 'Aprobado'],
  ['Fotocopia del documento de identidad', '11/11/2020', 'Rechazado'],
  ['Ficha Sisben', '22/07/2020', 'Rechazado'],
  ['Formulario de Afiliación', '22/07/2020', 'Aprobado'],
];

const blurColors = ['#7a97b8', '#b8927a', '#6f93b8', '#a86a6a', '#c09a78', '#a3a77e', '#5f90bd'];

const contactFields: { icon: ReactNode; label?: string; value: string }[] = [
  { icon: <MdCall size={30} />, value: 'Teléfono fijo' },
  { icon: <TabletIcon />, label: 'Número celular', value: '3204852039' },
  { icon: <TabletIcon />, value: 'Otro Celular' },
  { icon: <MdEmail size={30} />, label: 'Correo electrónico', value: 'notiene@gmail.com' },
  { icon: <MdPlace size={29} />, label: 'Dirección', value: 'VDA  EL PLACER      URIBE  JULIA' },
];

const App = () => (
  <Screen>
    <GlobalStyle />
    <LeftStrip>
      <StripTab>Ge</StripTab>
      <StripUrl>jax</StripUrl>
      <StripDark />
      <StripBody />
      <StripFoot><ChevronUp size={14} /></StripFoot>
    </LeftStrip>

    <Window>
      <TitleBar>
        <TitleBlock><IslBadge>+</IslBadge>CAJACOPIEPS\C002ELURIBE - ISL Light</TitleBlock>
        <BlurredTabs>
          {blurColors.map(color => (
            <BlurredTab key={color}><BlurDot $color={color} /><BlurLabel /></BlurredTab>
          ))}
        </BlurredTabs>
        <BlurCircle />
        <WinControls>
          <WinControl $w={31}><WinMinMark /></WinControl>
          <WinControl $w={27}><WinMaxMark /></WinControl>
          <WinControl $w={44} $close>X</WinControl>
        </WinControls>
      </TitleBar>

      <LowerRow>
        <RemoteFrame>
          <Toolbar>
            <GridIcon />
            <ToolGroup>
              <ToolBtn><MonitorIcon /></ToolBtn>
              <ToolBtn><FolderIcon /></ToolBtn>
              <ToolBtn><ChatIcon /><ChatBadge>4</ChatBadge></ToolBtn>
              <ToolSep />
              <ToolBtn>1:1</ToolBtn>
              <ToolBtn $active><ResizeIcon /></ToolBtn>
              <ToolSep />
              <ToolBtn><PencilIcon /></ToolBtn>
              <ToolBtn><EraserIcon /></ToolBtn>
              <ToolBtn><PinIcon /></ToolBtn>
              <ToolBtn $active><ArrowIcon /></ToolBtn>
              <ToolSep />
              <ToolBtn><KeyboardIcon /></ToolBtn>
              <ToolBtn><WaveMonitorIcon /></ToolBtn>
              <ToolBtn><GaugeIcon /></ToolBtn>
              <ToolBtn><ToolsIcon /></ToolBtn>
              <ToolBtn><DotIcon /></ToolBtn>
              <ToolBtn><MonitorCloseIcon /></ToolBtn>
            </ToolGroup>
            <ExpandBtn><ExpandIcon /></ExpandBtn>
          </Toolbar>

          <RemoteBody>
            <Browser>
              <TabStrip>
                <InactiveTab>
                  <CajacopiLogo />
                  <TabLabel>Cajacopi EPS – Entidad Promotora</TabLabel>
                  <TabClose><X size={13} strokeWidth={2.4} /></TabClose>
                </InactiveTab>
                <ActiveTab>
                  <GenesisLogo />
                  <ActiveTabLabel>Portal Genesis - Datos</ActiveTabLabel>
                </ActiveTab>
                <StripControls>
                  <StripControl><Minus size={14} strokeWidth={1.4} /></StripControl>
                  <StripControl><svg width="12" height="12" viewBox="0 0 12 12" fill="none" stroke="#222"><path d="M3.500 3V1h7v7H8.500" /><rect x="1.500" y="3.500" width="7" height="7" /></svg></StripControl>
                  <StripControl><X size={16} strokeWidth={1.2} /></StripControl>
                </StripControls>
              </TabStrip>

              <AddressBar>
                <NavIcons>
                  <ArrowLeft size={20} />
                  <ArrowRight size={20} color="#bbb" />
                  <RotateCw size={17} />
                </NavIcons>
                <LockSlot><FaLock size={11} /></LockSlot>
                <UrlText>genesis.cajacopieps.com/app.php#/datosbasicos</UrlText>
                <AddressActions>
                  <TranslateMark>G</TranslateMark>
                  <Star size={16} />
                  <Avatar size={28} />
                  <EllipsisVertical size={18} />
                </AddressActions>
              </AddressBar>

              <Content>
                <Sidebar>
                  <SearchBox>Buscar</SearchBox>
                  {topMenus.map((m, i) => (
                    <MenuItem key={i}>
                      <MenuIcon>{m.icon}</MenuIcon>
                      <MenuLabel>{m.label}</MenuLabel>
                      <MenuChevron>{chevron}</MenuChevron>
                    </MenuItem>
                  ))}
                  <MenuItem $active>
                    <MenuIcon $active><FaUser size={20} /></MenuIcon>
                    <MenuLabel>Consulta<br />afiliados</MenuLabel>
                    <MenuChevron $active><ChevronUp size={16} strokeWidth={2.6} /></MenuChevron>
                  </MenuItem>
                  {subMenus.map((s, i) => (
                    <SubItem key={s} $active={i === 0}>{s}</SubItem>
                  ))}
                  {lowerMenus.map((m, i) => (
                    <MenuItem key={i}>
                      <MenuIcon>{m.icon}</MenuIcon>
                      <MenuLabel>{m.label}</MenuLabel>
                      <MenuChevron>{chevron}</MenuChevron>
                    </MenuItem>
                  ))}
                </Sidebar>
                <SideTrack />

                <Main>
                  <TopCard>
                    <AffiliateRow>
                      <span>CC</span>
                      <span>1148956681</span>
                      <span>Villamizar Ballestero Omaira</span>
                      <span>BENEFICIARIO - CONYUGUE</span>
                      <CheckMark><Check size={26} strokeWidth={1.5} /></CheckMark>
                      <span>1129</span>
                      <CellIcon><BookIcon /></CellIcon>
                      <CellIcon><SwapIcon /></CellIcon>
                    </AffiliateRow>
                  </TopCard>

                  <Columns>
                    <Card $w={673}>
                      <CardHeader $h={68} $pl={21}>
                        <CardTitle>Información General</CardTitle>
                        <MenuButton><MdMenu size={20} /></MenuButton>
                      </CardHeader>
                      <InfoBody>
                        <Person>
                          <PersonName>Villamizar Ballestero Omaira</PersonName>
                          <PersonStrong>CC - 1148956681</PersonStrong>
                          <BirthRow>
                            <BirthIcon width="14" height="14" viewBox="0 0 14 14" fill="#999">
                              <path d="M1 2h12v10H1Z" /><circle cx="7" cy="6" r="2" fill="#fff" />
                            </BirthIcon>
                            15/05/1980
                          </BirthRow>
                          <div>META - LA URIBE</div>
                          <div>VEREDA EL PLACER</div>
                          <InfoGroup>
                            <div><Strong>Regimen:</Strong> SUBSIDIADO - <ActiveText>ACTIVO</ActiveText></div>
                            <div><Strong>Estado BDUA:</Strong> ACTIVO</div>
                            <div><Strong>Grupo Poblacional: Poblacion sisbenizada</Strong></div>
                            <div><Strong>Fecha Afiliación:</Strong> 08-03-2019</div>
                          </InfoGroup>
                          <InfoGroup><Strong>Sexo:</Strong> FEMENINO</InfoGroup>
                          <InfoGroup><Strong>Ficha Sisben:</Strong> 1129</InfoGroup>
                          <InfoGroup><Strong>Nivel:</Strong> 1</InfoGroup>
                        </Person>
                        <Contact>
                          {contactFields.map(f => (
                            <Field key={f.value}>
                              <FieldIcon>{f.icon}</FieldIcon>
                              <FieldBody>
                                {f.label && <FieldLabel>{f.label}</FieldLabel>}
                                <FieldValue>{f.value}</FieldValue>
                              </FieldBody>
                            </Field>
                          ))}
                          <DisabledButton>GENERAR CERTIFICADOS</DisabledButton>
                        </Contact>
                      </InfoBody>
                      <InfoActions>
                        <PrimaryButton $w={265}>ACTUALIZAR INFORMACIÓN</PrimaryButton>
                        <PrimaryButton $w={337}>MIS DATOS YA ESTAN ACTUALIZADOS</PrimaryButton>
                      </InfoActions>
                    </Card>

                    <DocsCard $w={475}>
                      <CardHeader $h={67} $pl={20}>
                        <CardTitle>Documentos Anexos</CardTitle>
                      </CardHeader>
                      <DocsBody>
                        <DocsTable>
                          <thead>
                            <tr>
                              <HeadCell $w={245}>Tipo Anexo</HeadCell>
                              <HeadCell $w={96}>Fecha Anexo</HeadCell>
                              <HeadCell $w={86}>Estado</HeadCell>
                            </tr>
                          </thead>
                          <tbody>
                            {documents.map((d, i) => (
                              <tr key={i}>
                                <DocCell>{d[0]}</DocCell>
                                <DocCell>{d[1]}</DocCell>
                                <DocCell>{d[2]}</DocCell>
                              </tr>
                            ))}
                          </tbody>
                        </DocsTable>
                      </DocsBody>
                      <DocsScroll><ChevronDown size={7} /></DocsScroll>
                    </DocsCard>
                  </Columns>
                </Main>
                <PageTrack />
              </Content>

              <Taskbar>
                <TaskSlot><WindowsLogo /></TaskSlot>
                <TaskSlot><SevenZip>7z</SevenZip></TaskSlot>
                <TaskSlot><FolderTask /></TaskSlot>
                <TaskSlot $active><ChromeLogo /></TaskSlot>
                <TaskSlot><DocTask color="#1b6fa8" tint="#1b6fa8" /></TaskSlot>
                <TaskSlot><DocTask color="#3aa03c" tint="#3aa03c" /></TaskSlot>
                <TaskSlot><ScannerTask /></TaskSlot>
                <TaskSlot><IslTask /></TaskSlot>
                <Tray>
                  <TrayIcon $w={24}><ChevronUp size={16} /></TrayIcon>
                  <TrayIcon $w={24}><NetworkIcon /></TrayIcon>
                  <TrayIcon $w={22}><VolumeIcon /></TrayIcon>
                  <TrayIcon $w={38}>ESP</TrayIcon>
                  <TrayClock>11:32 a. m.<br />28/01/2021</TrayClock>
                  <TrayIcon $w={34}><NotifyIcon /></TrayIcon>
                  <TrayIcon $w={13} />
                </Tray>
              </Taskbar>
            </Browser>
            <RightRail />
          </RemoteBody>

          <Status>
            Servidor: 192.168.50.24 | 00:18:55
            <StatusCenter><SyncIcon />El cliente está mostrando su pantalla | Zoom: (100%)</StatusCenter>
            <StatusEnd>El operador tiene el control</StatusEnd>
          </Status>
        </RemoteFrame>
        <OuterScroll />
      </LowerRow>
    </Window>

    <SessionBar>
      <SessionItem $w={177} $pl={16}><Power size={13} color="#c2332b" />finalizar remoto</SessionItem>
      <SessionItem $w={151}><SmallPointer />denegar control</SessionItem>
      <SessionItem $w={243} $color="#c0202a">Usuario local tiene el control</SessionItem>
      <SessionItem $w={47} $color="#5c9a14">0%</SessionItem>
      <PinCrossIcon />
    </SessionBar>

    <MouseCursor width="15" height="21" viewBox="0 0 15 21" fill="#fff" stroke="#111">
      <path d="M1 1v15l4-3.500 3 7 2.500-1-3-6.800H13Z" />
    </MouseCursor>

    <SettingsFab><MdSettings size={24} /></SettingsFab>
  </Screen>
);

export default App;
